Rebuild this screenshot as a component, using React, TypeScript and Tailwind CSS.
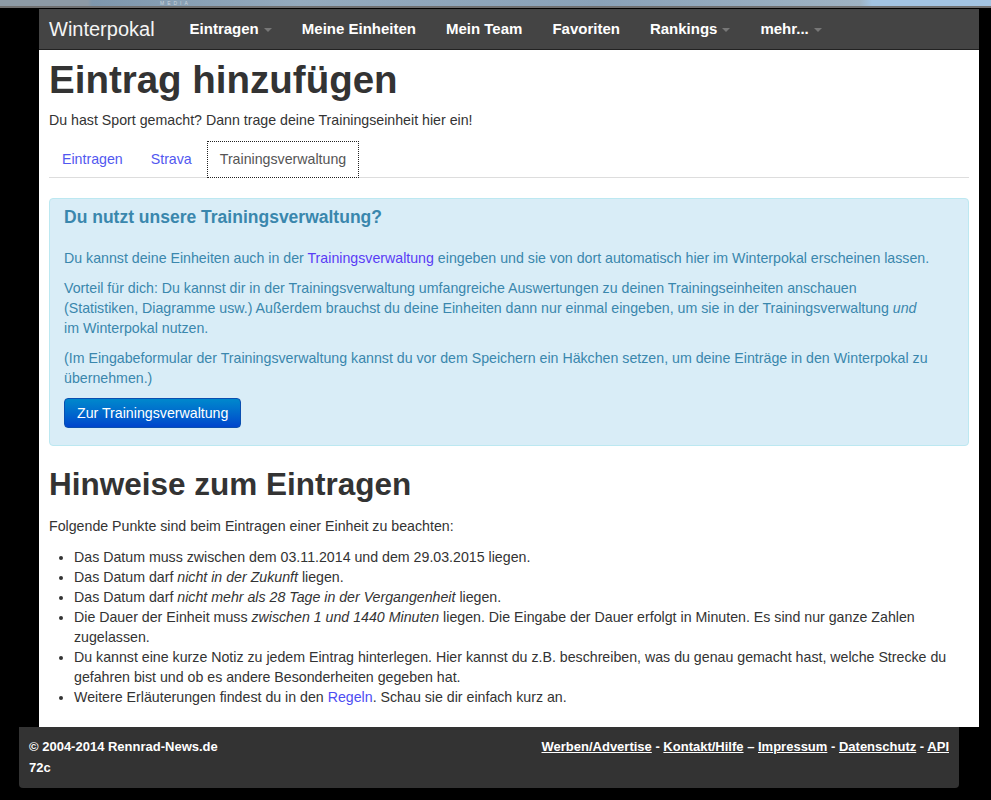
const navItems = [
  { label: "Eintragen", caret: true },
  { label: "Meine Einheiten", caret: false },
  { label: "Mein Team", caret: false },
  { label: "Favoriten", caret: false },
  { label: "Rankings", caret: true },
  { label: "mehr...", caret: true },
];

function Caret() {
  return (
    <span className="ml-[5px] mt-[2px] inline-block h-0 w-0 border-x-[4px] border-t-[4px] border-x-transparent border-t-[#777]" />
  );
}

function Tab({ label, active }: { label: string; active?: boolean }) {
  if (active) {
    return (
      <li className="-mb-px mr-[2px] border border-dotted border-[#222] bg-white px-[12px] py-[7px] text-[#555]">
        {label}
      </li>
    );
  }
  return (
    <li className="mr-[2px] border border-transparent px-[12px] py-[7px] text-[#5258f0]">
      {label}
    </li>
  );
}

export default function App() {
  return (
    <div className="min-h-screen bg-black font-['Liberation_Sans',Arial,sans-serif] text-[14.2px] leading-[20px] text-[#333]">
      {/* header image strip, mostly cut off */}
      <div className="relative h-[8px] overflow-hidden border-b-2 border-[#6f6f6f] bg-[linear-gradient(90deg,#8d9aa5_0px,#8d9aa5_88px,#7e97ad_92px,#94aabd_300px,#8aa2b8_600px,#9fb3c3_860px,#a3c4e2_872px,#a3c4e2_100%)]">
        <span className="absolute left-[160px] top-0 text-[5px] leading-[6px] tracking-[3px] text-[#c9d3db]">
          MEDIA
        </span>
      </div>

      <div className="ml-[39px] mt-[1px] w-[940px]">
        <nav className="flex h-[41px] items-center border-b border-[#222] bg-[#444] pl-[10px]">
          <span className="pr-[20px] text-[20px] text-[#f4f4f4]">Winterpokal</span>
          {navItems.map((item) => (
            <span
              key={item.label}
              className="flex items-center px-[15px] text-[15px] font-bold text-white"
            >
              {item.label}
              {item.caret && <Caret />}
            </span>
          ))}
        </nav>

        <main className="bg-white px-[10px] pb-[10px] pt-[10px]">
          <h1 className="mb-[10px] text-[38.5px] font-bold leading-[40px]">Eintrag hinzufügen</h1>
          <p className="mb-[11px]">Du hast Sport gemacht? Dann trage deine Trainingseinheit hier ein!</p>

          <ul className="mb-[20px] flex border-b border-[#ddd]">
            <Tab label="Eintragen" />
            <Tab label="Strava" />
            <Tab label="Trainingsverwaltung" active />
          </ul>

          <div className="rounded-[4px] border border-[#bce8f1] bg-[#d9edf7] pl-[14px] pr-[35px] pt-[8px] pb-[8px] text-[#3a87ad]">
            <h4 className="mb-[21px] text-[17.5px] font-bold leading-[20px]">
              Du nutzt unsere Trainingsverwaltung?
            </h4>
            <p className="mb-[10px]">
              Du kannst deine Einheiten auch in der{" "}
              <span className="text-[#5a3cf5]">Trainingsverwaltung</span> eingeben und sie von dort
              automatisch hier im Winterpokal erscheinen lassen.
            </p>
            <p className="mb-[10px]">
              Vorteil für dich: Du kannst dir in der Trainingsverwaltung umfangreiche Auswertungen zu
              deinen Trainingseinheiten anschauen (Statistiken, Diagramme usw.) Außerdem brauchst du
              deine Einheiten dann nur einmal eingeben, um sie in der Trainingsverwaltung <i>und</i>{" "}
              im Winterpokal nutzen.
            </p>
            <p className="mb-[10px]">
              (Im Eingabeformular der Trainingsverwaltung kannst du vor dem Speichern ein Häkchen
              setzen, um deine Einträge in den Winterpokal zu übernehmen.)
            </p>
            <p className="mb-[9px]">
              <span className="inline-block rounded-[4px] border border-[#0a4fb0] bg-gradient-to-b from-[#0088cc] to-[#0044cc] px-[12px] py-[4px] text-white">
                Zur Trainingsverwaltung
              </span>
            </p>
          </div>

          <h2 className="mb-[12px] mt-[18px] text-[31.5px] font-bold leading-[40px]">
            Hinweise zum Eintragen
          </h2>
          <p className="mb-[11px]">Folgende Punkte sind beim Eintragen einer Einheit zu beachten:</p>
          <ul className="mb-[10px] list-disc pl-[25px]">
            <li>Das Datum muss zwischen dem 03.11.2014 und dem 29.03.2015 liegen.</li>
            <li>
              Das Datum darf <i>nicht in der Zukunft</i> liegen.
            </li>
            <li>
              Das Datum darf <i>nicht mehr als 28 Tage in der Vergangenheit</i> liegen.
            </li>
            <li>
              Die Dauer der Einheit muss <i>zwischen 1 und 1440 Minuten</i> liegen. Die Eingabe der
              Dauer erfolgt in Minuten. Es sind nur ganze Zahlen zugelassen.
            </li>
            <li>
              Du kannst eine kurze Notiz zu jedem Eintrag hinterlegen. Hier kannst du z.B.
              beschreiben, was du genau gemacht hast, welche Strecke du gefahren bist und ob es andere
              Besonderheiten gegeben hat.
            </li>
            <li>
              Weitere Erläuterungen findest du in den <span className="text-[#4d4df2]">Regeln</span>.
              Schau sie dir einfach kurz an.
            </li>
          </ul>
        </main>
      </div>

      <footer className="ml-[19px] flex w-[940px] justify-between rounded-b-[4px] bg-[#333] px-[10px] pt-[10px] pb-[10px] text-[13px] font-bold leading-[20.5px] text-white">
        <div>
          <div>© 2004-2014 Rennrad-News.de</div>
          <div>72c</div>
        </div>
        <div>
          <span className="underline">Werben/Advertise</span> - <span className="underline">Kontakt/Hilfe</span>{" "}
          – <span className="underline">Impressum</span> - <span className="underline">Datenschutz</span> -{" "}
          <span className="underline">API</span>
        </div>
      </footer>
    </div>
  );
}
